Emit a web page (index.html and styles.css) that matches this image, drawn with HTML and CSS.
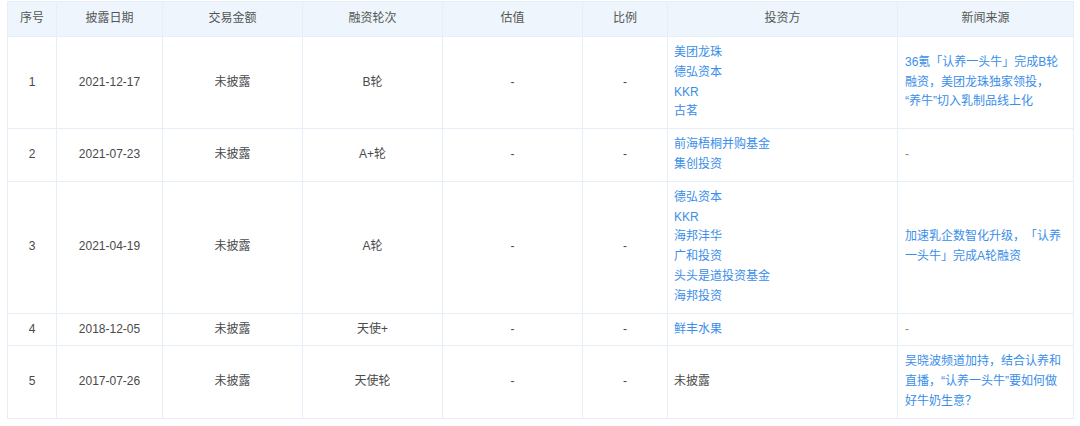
FILE: index.html
```html
<!DOCTYPE html>
<html lang="zh-CN">
<head>
<meta charset="utf-8">
<title>融资历程</title>
<link rel="stylesheet" href="styles.css">
</head>
<body>
<div class="wrap">
<table class="fin">
  <colgroup>
    <col class="c-no"><col class="c-date"><col class="c-amt"><col class="c-round"><col class="c-val"><col class="c-ratio"><col class="c-inv"><col class="c-news">
  </colgroup>
  <thead>
    <tr>
      <th>序号</th><th>披露日期</th><th>交易金额</th><th>融资轮次</th><th>估值</th><th>比例</th><th>投资方</th><th>新闻来源</th>
    </tr>
  </thead>
  <tbody>
    <tr>
      <td>1</td><td>2021-12-17</td><td>未披露</td><td>B轮</td><td>-</td><td>-</td>
      <td class="left"><a>美团龙珠</a><a>德弘资本</a><a>KKR</a><a>古茗</a></td>
      <td class="left news-cell"><a class="news">36氪「认养一头牛」完成B轮融资，美团龙珠独家领投，“养牛”切入乳制品线上化</a></td>
    </tr>
    <tr>
      <td>2</td><td>2021-07-23</td><td>未披露</td><td>A+轮</td><td>-</td><td>-</td>
      <td class="left"><a>前海梧桐并购基金</a><a>集创投资</a></td>
      <td class="left news-cell muted">-</td>
    </tr>
    <tr>
      <td>3</td><td>2021-04-19</td><td>未披露</td><td>A轮</td><td>-</td><td>-</td>
      <td class="left"><a>德弘资本</a><a>KKR</a><a>海邦沣华</a><a>广和投资</a><a>头头是道投资基金</a><a>海邦投资</a></td>
      <td class="left news-cell"><a class="news">加速乳企数智化升级，「认养一头牛」完成A轮融资</a></td>
    </tr>
    <tr>
      <td>4</td><td>2018-12-05</td><td>未披露</td><td>天使+</td><td>-</td><td>-</td>
      <td class="left"><a>鲜丰水果</a></td>
      <td class="left news-cell muted">-</td>
    </tr>
    <tr>
      <td>5</td><td>2017-07-26</td><td>未披露</td><td>天使轮</td><td>-</td><td>-</td>
      <td class="left">未披露</td>
      <td class="left news-cell"><a class="news">吴晓波频道加持，结合认养和直播，“认养一头牛”要如何做好牛奶生意？</a></td>
    </tr>
  </tbody>
</table>
</div>
</body>
</html>
```
FILE: styles.css
```css
html, body {
  margin: 0;
  padding: 0;
  background: #ffffff;
}
body {
  font-family: "Liberation Sans", "Noto Sans CJK SC", sans-serif;
  font-size: 12px;
  color: #4a4a4a;
  text-spacing-trim: space-all;
}
.wrap {
  padding: 1px 7px 0 7px;
}
.fin {
  width: 1066px;
  table-layout: fixed;
  border-collapse: collapse;
}
.c-no { width: 49px; }
.c-date { width: 106px; }
.c-amt { width: 140px; }
.c-round { width: 140px; }
.c-val { width: 140px; }
.c-ratio { width: 85px; }
.c-inv { width: 230px; }
.c-news { width: 176px; }
.fin th, .fin td {
  border: 1px solid #e6eef7;
  text-align: center;
  vertical-align: middle;
  line-height: 19.8px;
}
.fin th {
  background: #eef5fc;
  font-weight: normal;
  color: #555555;
  height: 34px;
  padding: 0 6px;
}
.fin td {
  padding: 6px 6px;
}
.fin td.left {
  text-align: left;
}
.fin td.news-cell {
  padding: 6px 10px 6px 7px;
}
.fin a {
  display: block;
  color: #3a8ee8;
  text-decoration: none;
}
.fin td.muted {
  color: #888888;
}
```
